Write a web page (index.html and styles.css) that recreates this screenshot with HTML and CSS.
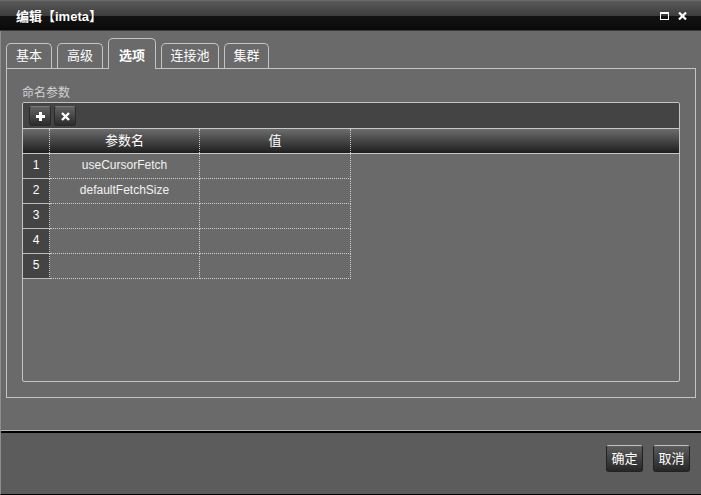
FILE: index.html
```html
<!DOCTYPE html>
<html lang="zh">
<head>
<meta charset="utf-8">
<title>编辑【imeta】</title>
<link rel="stylesheet" href="styles.css">
</head>
<body>
<div class="win">
  <div class="titlebar">
    <span class="title">编辑【imeta】</span>
    <div class="ctrls">
      <span class="ic-max"></span>
      <svg class="ic-close" width="9" height="8" viewBox="0 0 9 8"><path d="M1 0.5 L8 7.5 M8 0.5 L1 7.5" stroke="#fff" stroke-width="2.2" fill="none"/></svg>
    </div>
  </div>
  <div class="frame">
    <div class="main">
      <div class="tabs">
        <div class="tab w46">基本</div>
        <div class="tab w46">高级</div>
        <div class="tab active w48">选项</div>
        <div class="tab w58">连接池</div>
        <div class="tab w45">集群</div>
      </div>
      <div class="panel">
        <div class="legend">命名参数</div>
        <div class="grid">
          <div class="toolbar">
            <button class="tbtn" title="添加"><svg width="9" height="9" viewBox="0 0 9 9"><path d="M3 0h3v3h3v3h-3v3h-3v-3h-3v-3h3z" fill="#fff"/></svg></button>
            <button class="tbtn" title="删除"><svg width="9" height="9" viewBox="0 0 9 9"><path d="M1 1 L8 8 M8 1 L1 8" stroke="#fff" stroke-width="2.4" fill="none"/></svg></button>
          </div>
          <div class="hdr">
            <div class="cell c0"></div>
            <div class="cell c1">参数名</div>
            <div class="cell c2">值</div>
          </div>
          <div class="row"><div class="cell c0 num">1</div><div class="cell c1">useCursorFetch</div><div class="cell c2"></div></div>
          <div class="row"><div class="cell c0 num">2</div><div class="cell c1">defaultFetchSize</div><div class="cell c2"></div></div>
          <div class="row"><div class="cell c0 num">3</div><div class="cell c1"></div><div class="cell c2"></div></div>
          <div class="row"><div class="cell c0 num">4</div><div class="cell c1"></div><div class="cell c2"></div></div>
          <div class="row"><div class="cell c0 num">5</div><div class="cell c1"></div><div class="cell c2"></div></div>
        </div>
      </div>
    </div>
    <div class="footer">
      <button class="fbtn">确定</button>
      <button class="fbtn">取消</button>
    </div>
  </div>
</div>
</body>
</html>
```
FILE: styles.css
```css
* { box-sizing: border-box; }
html, body { margin: 0; padding: 0; }
body {
  width: 701px;
  height: 495px;
  overflow: hidden;
  background: #6a6a6a;
  font-family: "Liberation Sans", "Noto Sans CJK SC", sans-serif;
  color: #fff;
}
.win { display: flex; flex-direction: column; height: 495px; }

.titlebar {
  flex: none;
  height: 31px;
  display: flex;
  align-items: center;
  padding: 0 14px 0 16px;
  background: linear-gradient(to bottom, #7a7a7a 0px, #5a5a5a 1px, #3c3c3c 16px, #121212 16px, #0a0a0a 30px);
  border-bottom: 1px solid #3a3a3a;
}
.title { font-size: 13px; font-weight: bold; line-height: 16px; margin-top: 3px; }
.ctrls { margin-left: auto; display: flex; align-items: center; gap: 9px; margin-top: 1px; }
.ic-max { width: 9px; height: 8px; border: 1px solid #fff; border-top-width: 2px; display: block; }
.ic-close { display: block; }

.frame {
  flex: 1;
  display: flex;
  flex-direction: column;
  border-left: 1px solid #8e8e8e;
  border-bottom: 1px solid #000;
}
.main {
  height: 400px;
  padding: 7px 5px 0 5px;
  border-bottom: 1px solid #b8b8b8;
}

.tabs { display: flex; align-items: flex-end; gap: 5px; height: 30px; }
.tab {
  height: 25px;
  border: 1px solid #c4c4c4;
  border-bottom: none;
  border-radius: 5px 5px 0 0;
  font-size: 13px;
  line-height: 16px;
  text-align: center;
  padding-top: 4px;
  color: #fff;
}
.tab.active {
  height: 31px;
  margin-bottom: -1px;
  padding-top: 9px;
  font-weight: bold;
  background: #6a6a6a;
  position: relative;
  z-index: 1;
}
.w45 { width: 45px; }
.w46 { width: 46px; }
.w48 { width: 48px; }
.w58 { width: 58px; }

.panel {
  height: 330px;
  border: 1px solid #c4c4c4;
  padding: 17px 15px 15px 15px;
}
.legend { font-size: 12px; line-height: 14px; color: #d2d2d2; margin-bottom: 2px; }

.grid {
  height: 280px;
  border: 1px solid #c4c4c4;
  border-radius: 2px;
  overflow: hidden;
}
.toolbar {
  height: 25px;
  background: #444;
  display: flex;
  gap: 3px;
  padding: 3px 0 0 6px;
}
.tbtn {
  width: 22px;
  height: 20px;
  padding: 0;
  margin: 0;
  border: 1px solid #2a2a2a;
  border-top-color: #7a7a7a;
  border-radius: 3px;
  background: linear-gradient(to bottom, #626262, #2c2c2c);
  display: flex;
  align-items: center;
  justify-content: center;
}
.tbtn svg { display: block; }

.hdr {
  display: flex;
  height: 26px;
  border-top: 1px solid #c8c8c8;
  border-bottom: 1px solid #c8c8c8;
  background: linear-gradient(to bottom, #6c6c6c, #1e1e1e);
}
.hdr .cell { font-size: 13px; line-height: 24px; color: #fff; }
.cell {
  height: 100%;
  text-align: center;
  border-right: 1px dotted #cfcfcf;
}
.c0 { width: 27px; }
.c1 { width: 150px; }
.c2 { width: 151px; }

.row { display: flex; height: 25px; }
.row .cell {
  font-size: 12px;
  line-height: 22px;
  color: #f2f2f2;
  border-bottom: 1px dotted #cfcfcf;
}
.row .num {
  background: #444;
  border-bottom: 1px solid #bcbcbc;
  color: #fff;
}

.footer {
  flex: 1;
  border-top: 2px solid #000;
  background: #5c5c5c;
  display: flex;
  justify-content: flex-end;
  align-items: flex-start;
  gap: 10px;
  padding: 12px 11px 0 0;
}
.fbtn {
  width: 37px;
  height: 27px;
  margin: 0;
  padding: 0;
  border: 1px solid #222;
  border-top-color: #c0c0c0;
  border-radius: 3px;
  background: linear-gradient(to bottom, #5c5c5c, #262626);
  color: #fff;
  font-family: "Liberation Sans", "Noto Sans CJK SC", sans-serif;
  font-size: 13px;
  line-height: 16px;
}
```
